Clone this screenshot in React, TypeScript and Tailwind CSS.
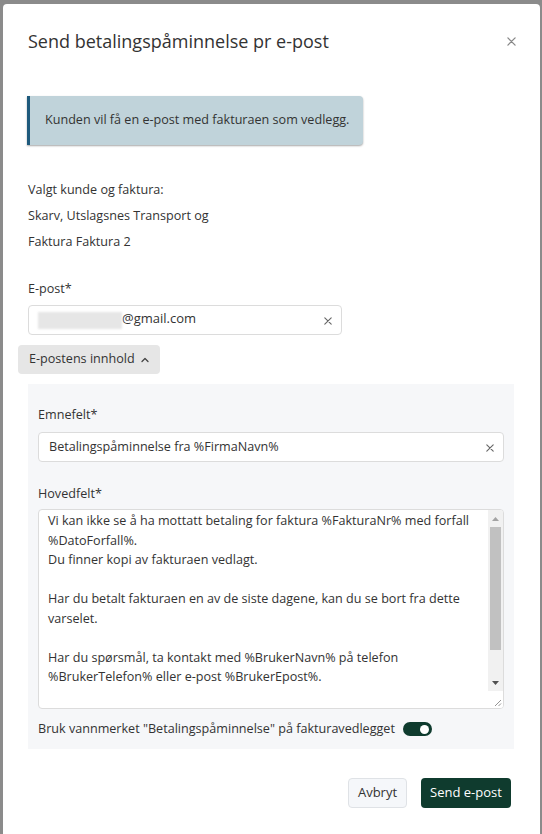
import React from "react";

function XIcon({ size = 8, color = "#777" }: { size?: number; color?: string }) {
  return (
    <svg width={size} height={size} viewBox="0 0 10 10" fill="none">
      <path d="M1 1L9 9M9 1L1 9" stroke={color} strokeWidth="1.4" strokeLinecap="round" />
    </svg>
  );
}

export default function App() {
  return (
    <div className="w-[542px] h-[834px] bg-[#8b8b8b] overflow-hidden pl-[3px] pr-[2px] pt-[4px] font-['Open_Sans',sans-serif] text-[#333]">
      <div className="bg-white rounded-t-[4px] h-[840px] pl-[25px] pr-[26px]">
        {/* header */}
        <div className="flex items-center justify-between pt-[23px]">
          <h1 className="text-[18px] leading-[28px] text-[#333] font-normal">Send betalingspåminnelse pr e-post</h1>
          <div className="mr-[-2px] flex items-center">
            <XIcon size={9} color="#888" />
          </div>
        </div>

        {/* info */}
        <div className="mt-[41px] ml-[-1px] w-[336px] h-[49px] flex items-center bg-[#c0d3da] border-l-[3px] border-[#1e5a7c] rounded-r-[4px] shadow-[0_1px_2px_rgba(0,0,0,0.35)] pl-[15px]">
          <span className="text-[12.6px] text-[#333]">Kunden vil få en e-post med fakturaen som vedlegg.</span>
        </div>

        {/* selected */}
        <div className="mt-[32px] text-[12.6px] leading-[26px] text-[#333]">
          <div>Valgt kunde og faktura:</div>
          <div>Skarv, Utslagsnes Transport og</div>
          <div>Faktura Faktura 2</div>
        </div>

        {/* email */}
        <div className="mt-[24px] text-[12.6px] leading-[20px]">E-post*</div>
        <div className="mt-[6px] w-[314px] h-[30px] border border-[#dcdcdc] rounded-[4px] flex items-center pl-[9px] pr-[9px]">
          <div className="w-[84px] h-[17px] bg-[#e6e6e6] blur-[1px]" />
          <span className="text-[13px] text-[#333] mt-[-2px]">@gmail.com</span>
          <div className="ml-auto mt-[2px] flex items-center">
            <XIcon size={8} color="#666" />
          </div>
        </div>

        {/* accordion button */}
        <div className="mt-[10px] ml-[-10px] w-[142px] h-[29px] bg-[#e6e6e6] rounded-[4px] flex items-center pl-[11px]">
          <span className="text-[12.6px] text-[#333]">E-postens innhold</span>
          <svg className="ml-[6px]" width="8" height="6" viewBox="0 0 8 6" fill="none">
            <path d="M1 4.5L4 1.5L7 4.5" stroke="#444" strokeWidth="1.3" strokeLinecap="round" strokeLinejoin="round" />
          </svg>
        </div>

        {/* panel */}
        <div className="mt-[10px] bg-[#f6f7f9] px-[10px] pt-[21px] pb-[10px]">
          <div className="text-[12.6px] leading-[20px]">Emnefelt*</div>
          <div className="mt-[7px] h-[30px] bg-white border border-[#dcdcdc] rounded-[4px] flex items-center pl-[10px] pr-[9px]">
            <span className="text-[12.6px] text-[#333]">Betalingspåminnelse fra %FirmaNavn%</span>
            <div className="ml-auto mt-[2px] flex items-center">
              <XIcon size={8} color="#666" />
            </div>
          </div>

          <div className="mt-[22px] text-[12.6px] leading-[20px]">Hovedfelt*</div>
          <div className="mt-[5px] h-[200px] bg-white border border-[#dcdcdc] rounded-[4px] flex overflow-hidden">
            <div className="flex-1 overflow-hidden pl-[9px] pt-[1px] pr-[4px] text-[12.6px] leading-[19.5px] text-[#333]">
              <div>Vi kan ikke se å ha mottatt betaling for faktura %FakturaNr% med forfall %DatoForfall%.</div>
              <div>Du finner kopi av fakturaen vedlagt.</div>
              <div className="h-[19.5px]" />
              <div>Har du betalt fakturaen en av de siste dagene, kan du se bort fra dette varselet.</div>
              <div className="h-[19.5px]" />
              <div>Har du spørsmål, ta kontakt med %BrukerNavn% på telefon %BrukerTelefon% eller e-post %BrukerEpost%.</div>
              <div className="h-[17px]" />
              <div className="whitespace-nowrap">Dersom beløpet ikke er betalt innen kort tid, vil fakturaen bli sendt videre til inkasso.</div>
            </div>
            {/* scrollbar */}
            <div className="w-[15px] flex flex-col bg-[#f1f1f1]">
              <div className="h-[17px] flex items-center justify-center">
                <svg width="7" height="4" viewBox="0 0 7 4"><path d="M0 4L3.5 0L7 4Z" fill="#a3a3a3" /></svg>
              </div>
              <div className="h-[123px] mx-[2px] bg-[#c1c1c1]" />
              <div className="flex-1" />
              <div className="h-[17px] flex items-center justify-center">
                <svg width="7" height="4" viewBox="0 0 7 4"><path d="M0 0L3.5 4L7 0Z" fill="#505050" /></svg>
              </div>
              <div className="h-[17px] bg-white flex items-end justify-end pr-[1px] pb-[1px]">
                <svg width="8" height="8" viewBox="0 0 8 8">
                  <path d="M1 7L7 1M4.5 7L7 4.5" stroke="#888" strokeWidth="0.9" />
                </svg>
              </div>
            </div>
          </div>

          <div className="mt-[10px] flex items-center h-[20px]">
            <span className="text-[12.6px] leading-[20px] text-[#333]">Bruk vannmerket "Betalingspåminnelse" på fakturavedlegget</span>
            <div className="ml-[8px] w-[29px] h-[14px] rounded-full bg-[#0f3b2e] flex items-center justify-end pr-[3px]">
              <div className="w-[9px] h-[9px] rounded-full bg-white" />
            </div>
          </div>
        </div>

        {/* footer */}
        <div className="mt-[29px] flex justify-end gap-[14px] pr-[3px]">
          <button className="w-[59px] h-[30px] bg-[#f5f7fa] border border-[#dfe2e6] rounded-[4px] text-[13px] text-[#333]">Avbryt</button>
          <button className="w-[90px] h-[30px] bg-[#0f3b2e] rounded-[4px] text-[13px] text-white">Send e-post</button>
        </div>
      </div>
    </div>
  );
}
